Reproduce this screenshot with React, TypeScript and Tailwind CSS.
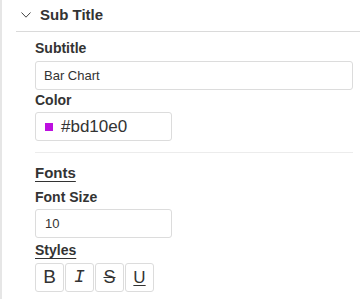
import React from "react";

export default function App() {
  const font = { fontFamily: '"Liberation Sans", Arial, sans-serif' };
  return (
    <div
      className="w-[360px] h-[299px] overflow-hidden bg-white border-l-2 border-[#e6e6e6] text-[#333333]"
      style={font}
    >
      <div className="ml-[14px] h-[32px] border-b border-[#dadada] flex items-center pl-[5px] pb-[2px]">
        <svg width="10" height="6" viewBox="0 0 10 6" className="mr-[9px]">
          <path d="M0.5 0.5 L5 5.2 L9.5 0.5" fill="none" stroke="#444" strokeWidth="1" />
        </svg>
        <span className="text-[15px] font-bold leading-[20px]">Sub Title</span>
      </div>
      <div className="pl-[33px] pr-[7px]">
        <div className="mt-[6px] h-[20px] text-[14px] font-bold leading-[20px]">Subtitle</div>
        <div className="mt-[3px] h-[29px] border border-[#dcdcdc] rounded-[3px] flex items-center pl-[8px] text-[13px]">
          Bar Chart
        </div>
        <div className="h-[20px] text-[14px] font-bold leading-[20px]">Color</div>
        <div className="mt-[2px] w-[137px] h-[29px] border border-[#dcdcdc] rounded-[3px] flex items-center pl-[9px]">
          <span className="w-[8px] h-[8px] bg-[#bd10e0] mr-[8px]" />
          <span className="text-[17px] leading-[20px]">#bd10e0</span>
        </div>
        <div className="mt-[11px] h-px bg-[#ececec]" />
        <div className="mt-[10px] h-[20px] text-[15px] font-bold leading-[20px]">
          <span className="underline underline-offset-[3px]">Fonts</span>
        </div>
        <div className="mt-[4px] h-[20px] text-[14px] font-bold leading-[20px]">Font Size</div>
        <div className="mt-[2px] w-[137px] h-[29px] border border-[#dcdcdc] rounded-[3px] flex items-center pl-[9px] text-[13px]">
          10
        </div>
        <div className="mt-[2px] h-[20px] text-[14px] font-bold leading-[20px]">
          <span className="underline underline-offset-[3px]">Styles</span>
        </div>
        <div className="mt-[3px] flex gap-[1px]">
          <div className="w-[29px] h-[29px] border border-[#dcdcdc] rounded-[3px] flex items-center justify-center text-[19px]">
            B
          </div>
          <div
            className="w-[29px] h-[29px] border border-[#dcdcdc] rounded-[3px] flex items-center justify-center text-[18px] italic"
            style={{ fontFamily: '"Liberation Mono", monospace' }}
          >
            I
          </div>
          <div className="w-[29px] h-[29px] border border-[#dcdcdc] rounded-[3px] flex items-center justify-center text-[18px] line-through">
            S
          </div>
          <div className="w-[29px] h-[29px] border border-[#dcdcdc] rounded-[3px] flex items-center justify-center text-[17px] underline underline-offset-[2px]">
            U
          </div>
        </div>
      </div>
    </div>
  );
}
